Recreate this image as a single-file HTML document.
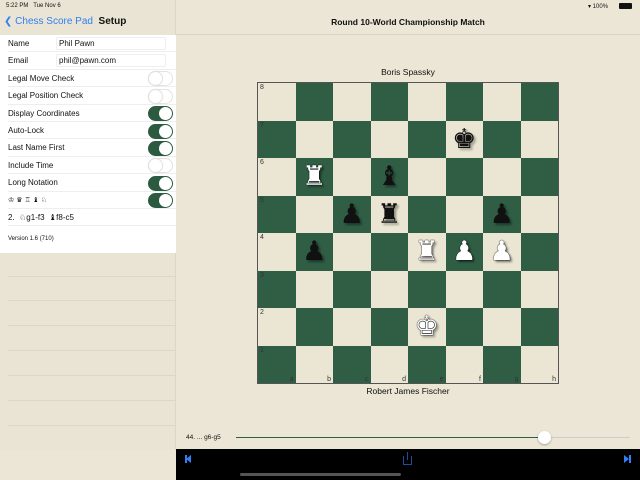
<!DOCTYPE html>
<html><head><meta charset="utf-8"><style>
*{margin:0;padding:0;box-sizing:border-box}
body{width:640px;height:480px;overflow:hidden;background:#ebe6d6;font-family:"Liberation Sans","DejaVu Sans",sans-serif;position:relative;color:#111}
.abs{position:absolute}
#left{left:0;top:0;width:176px;height:450px;background:#e9e4d3;border-right:1px solid #ddd8c6}
#list{left:0;top:35px;width:176px;height:218px;background:#fff}
.row{position:absolute;left:8px;width:168px;height:17.4px;font-size:8px;line-height:17px;border-bottom:1px solid #eee}
.tg{position:absolute;right:3px;top:1.5px;width:25px;height:15px;border-radius:8px;background:#fff;border:1px solid #e3e3e3}
.tg::after{content:"";position:absolute;left:0;top:0;width:13px;height:13px;border-radius:50%;background:#fff;box-shadow:0 0 1px 1px #ddd}
.tg.on{background:#2b5a41;border-color:#2b5a41}
.tg.on::after{left:10px;box-shadow:none}
.fld{position:absolute;left:48px;top:2px;width:110px;height:13px;border:1px solid #eee;border-radius:2px;padding-left:2px;line-height:12px}
.ln{position:absolute;left:8px;width:168px;height:1px;background:#ddd8c6}
#board{left:257px;top:82px;width:302px;height:302px;border:1px solid #555;display:grid;grid-template-columns:repeat(8,1fr);grid-template-rows:repeat(8,1fr)}
.sq{position:relative;background:#ebe6d3}
.d{background:#2f5e45}
.sq .r{position:absolute;left:2px;top:1px;font-size:7px;color:#333}
.sq .f{position:absolute;right:2px;bottom:0;font-size:7px;color:#333}
.p{position:absolute;left:0;top:0;width:100%;height:100%;text-align:center;font-family:"DejaVu Sans",sans-serif;font-size:27px;line-height:37px}
.w{color:#fff;text-shadow:0 0 1px #000,0 0 1px #000,2px 2px 2px rgba(0,0,0,.5)}
.b{color:#111;text-shadow:2px 2px 2px rgba(0,0,0,.4)}
</style></head><body>
<div id="left" class="abs">
 <div class="abs" style="left:4px;top:16px;font-size:10px;color:#2f7ff5">&#x276E; Chess Score Pad <b style="color:#111">&nbsp;Setup</b></div>
 <div class="ln" style="top:276px"></div><div class="ln" style="top:300px"></div><div class="ln" style="top:325px"></div><div class="ln" style="top:350px"></div><div class="ln" style="top:375px"></div><div class="ln" style="top:400px"></div><div class="ln" style="top:425px"></div>
</div>
<div class="abs" style="left:6px;top:3px;font-size:6px">5:22 PM &nbsp; Tue Nov 6</div>
<div class="abs" style="left:588px;top:3px;font-size:6px">&#x25BE; 100%</div>
<div class="abs" style="left:619px;top:3px;width:13px;height:6px;background:#111;border-radius:1px"></div>
<div class="abs" style="left:176px;top:34px;width:464px;height:1px;background:#d8d3c2"></div>
<div id="list" class="abs">
 <div class="row" style="top:0">Name<div class="fld">Phil Pawn</div></div>
 <div class="row" style="top:17.4px">Email<div class="fld">phil@pawn.com</div></div>
 <div class="row" style="top:34.8px">Legal Move Check<div class="tg"></div></div>
 <div class="row" style="top:52.2px">Legal Position Check<div class="tg"></div></div>
 <div class="row" style="top:69.6px">Display Coordinates<div class="tg on"></div></div>
 <div class="row" style="top:87px">Auto-Lock<div class="tg on"></div></div>
 <div class="row" style="top:104.4px">Last Name First<div class="tg on"></div></div>
 <div class="row" style="top:121.8px">Include Time<div class="tg"></div></div>
 <div class="row" style="top:139.2px">Long Notation<div class="tg on"></div></div>
 <div class="row" style="top:156.6px;font-size:7px">♔ ♛ ♖ ♝ ♘<div class="tg on"></div></div>
 <div class="row" style="top:174px">2. &nbsp;♘g1-f3 &nbsp;♝f8-c5</div>
 <div class="row" style="top:196px;font-size:6px;border:none">Version 1.6 (710)</div>
</div>
<div class="abs" style="left:176px;top:17px;width:464px;text-align:center;font-size:8.5px;font-weight:bold">Round 10-World Championship Match</div>
<div class="abs" style="left:176px;top:67px;width:464px;text-align:center;font-size:8.5px">Boris Spassky</div>
<div class="abs" style="left:176px;top:386px;width:464px;text-align:center;font-size:8.5px">Robert James Fischer</div>
<div id="board" class="abs">
<div class="sq"><span class="r">8</span></div><div class="sq d"></div><div class="sq"></div><div class="sq d"></div><div class="sq"></div><div class="sq d"></div><div class="sq"></div><div class="sq d"></div>
<div class="sq d"><span class="r">7</span></div><div class="sq"></div><div class="sq d"></div><div class="sq"></div><div class="sq d"></div><div class="sq"><span class="p b">♚</span></div><div class="sq d"></div><div class="sq"></div>
<div class="sq"><span class="r">6</span></div><div class="sq d"><span class="p w">♜</span></div><div class="sq"></div><div class="sq d"><span class="p b">♝</span></div><div class="sq"></div><div class="sq d"></div><div class="sq"></div><div class="sq d"></div>
<div class="sq d"><span class="r">5</span></div><div class="sq"></div><div class="sq d"><span class="p b">♟</span></div><div class="sq"><span class="p b">♜</span></div><div class="sq d"></div><div class="sq"></div><div class="sq d"><span class="p b">♟</span></div><div class="sq"></div>
<div class="sq"><span class="r">4</span></div><div class="sq d"><span class="p b">♟</span></div><div class="sq"></div><div class="sq d"></div><div class="sq"><span class="p w">♜</span></div><div class="sq d"><span class="p w">♟</span></div><div class="sq"><span class="p w">♟</span></div><div class="sq d"></div>
<div class="sq d"><span class="r">3</span></div><div class="sq"></div><div class="sq d"></div><div class="sq"></div><div class="sq d"></div><div class="sq"></div><div class="sq d"></div><div class="sq"></div>
<div class="sq"><span class="r">2</span></div><div class="sq d"></div><div class="sq"></div><div class="sq d"></div><div class="sq"><span class="p w">♚</span></div><div class="sq d"></div><div class="sq"></div><div class="sq d"></div>
<div class="sq d"><span class="r">1</span><span class="f">a</span></div><div class="sq"><span class="f">b</span></div><div class="sq d"><span class="f">c</span></div><div class="sq"><span class="f">d</span></div><div class="sq d"><span class="f">e</span></div><div class="sq"><span class="f">f</span></div><div class="sq d"><span class="f">g</span></div><div class="sq"><span class="f">h</span></div>
</div>
<div class="abs" style="left:186px;top:434px;font-size:6.5px">44. ... g6-g5</div>
<div class="abs" style="left:236px;top:437px;width:309px;height:1px;background:#2f5e45"></div>
<div class="abs" style="left:545px;top:437px;width:85px;height:1px;background:#ccc"></div>
<div class="abs" style="left:538px;top:431px;width:13px;height:13px;border-radius:50%;background:#fff;box-shadow:0 1px 2px rgba(0,0,0,.3)"></div>
<div class="abs" style="left:176px;top:449px;width:464px;height:31px;background:#000"></div>
<div class="abs" style="left:185px;top:455px;width:2px;height:8px;background:#2f7ff5"></div>
<div class="abs" style="left:186px;top:455px;width:0;height:0;border-top:4px solid transparent;border-bottom:4px solid transparent;border-right:5px solid #2f7ff5"></div>
<div class="abs" style="left:629px;top:455px;width:2px;height:8px;background:#2f7ff5"></div>
<div class="abs" style="left:624px;top:455px;width:0;height:0;border-top:4px solid transparent;border-bottom:4px solid transparent;border-left:5px solid #2f7ff5"></div>
<div class="abs" style="left:403px;top:456px;width:9px;height:9px;border:1px solid #1d4f99;border-top:none"></div>
<div class="abs" style="left:407px;top:452px;width:1px;height:8px;background:#1d4f99"></div>
<div class="abs" style="left:240px;top:473px;width:161px;height:3px;border-radius:2px;background:#555"></div>
</body></html>
